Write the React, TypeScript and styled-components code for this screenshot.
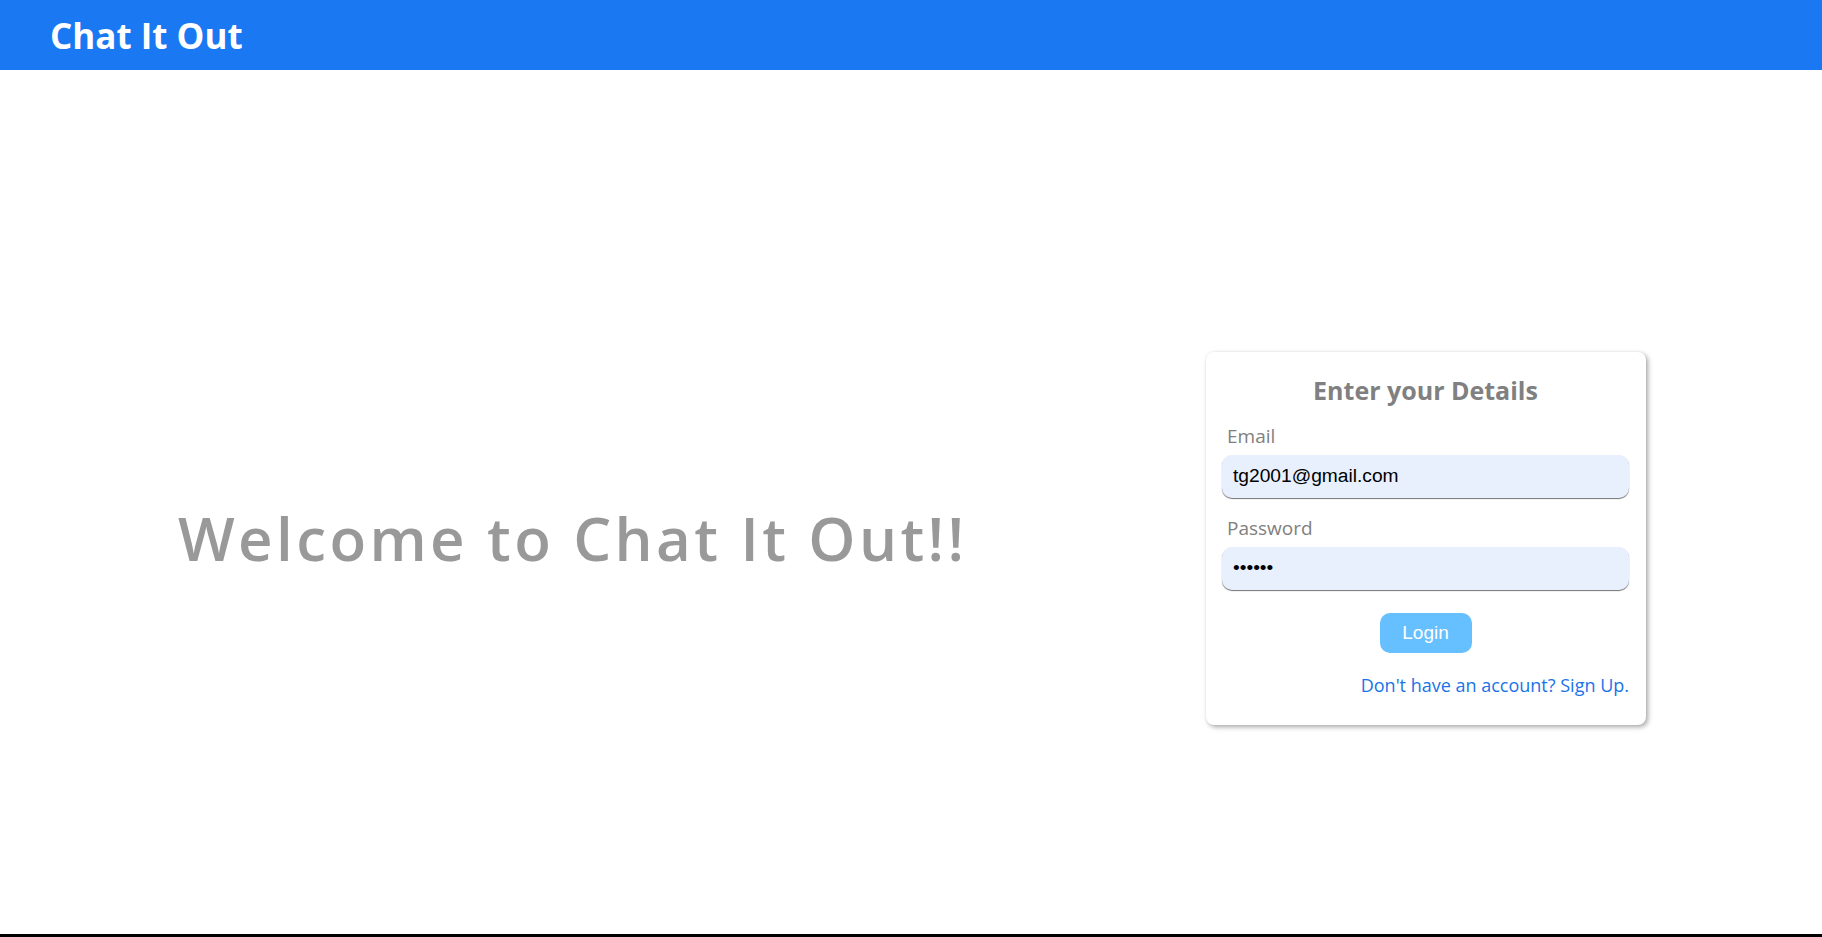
import React from "react";
import styled, { createGlobalStyle } from "styled-components";

const GlobalStyle = createGlobalStyle`
  html, body {
    margin: 0;
    padding: 0;
    background: #ffffff;
  }
  body {
    font-family: "Open Sans", "Noto Sans", sans-serif;
  }
  * { box-sizing: border-box; }
`;

const Page = styled.div`
  display: flex;
  flex-direction: column;
  height: 937px;
`;

const Header = styled.header`
  height: 70px;
  flex: 0 0 70px;
  background: #1a78f2;
  display: flex;
  align-items: center;
  padding-left: 50px;
`;

const Brand = styled.h1`
  margin: 0;
  font-family: "Open Sans", sans-serif;
  font-weight: 700;
  font-size: 35px;
  line-height: normal;
  color: #ffffff;
`;

const Main = styled.main`
  flex: 1;
  display: flex;
  align-items: center;
  justify-content: space-between;
  padding: 72px 176px 0 178px;
  border-bottom: 3px solid #000000;
`;

const Welcome = styled.h2`
  margin: 0;
  font-family: "Open Sans", sans-serif;
  font-weight: 650;
  font-size: 60px;
  font-stretch: 96%;
  letter-spacing: 3.4px;
  line-height: 76px;
  color: #999999;
`;

const Card = styled.form`
  width: 440px;
  padding: 21px 17px 28px 16px;
  background: #ffffff;
  border-radius: 8px;
  box-shadow: 2px 2px 5px rgba(0, 0, 0, 0.35), 0 0 2px rgba(0, 0, 0, 0.06);
  display: flex;
  flex-direction: column;
`;

const Title = styled.h3`
  margin: 0 0 16px;
  text-align: center;
  font-family: "Open Sans", sans-serif;
  font-weight: 700;
  font-size: 25px;
  line-height: normal;
  color: #808080;
`;

const Label = styled.label<{ $gap: number }>`
  margin-top: ${(p) => p.$gap}px;
  padding-left: 5px;
  font-family: "Open Sans", sans-serif;
  font-size: 19px;
  line-height: normal;
  color: #808080;
`;

const Input = styled.input`
  margin-top: 6px;
  width: 100%;
  height: 43px;
  border: none;
  outline: none;
  border-radius: 10px;
  background: #e8f0fe;
  box-shadow: 0 1px 1px rgba(0, 0, 0, 0.55);
  padding: 0 11px;
  font-family: "Liberation Sans", Arial, sans-serif;
  font-size: 19.2px;
  color: #000000;
`;

const Button = styled.button`
  align-self: center;
  margin-top: 23px;
  width: 92px;
  height: 40px;
  border: none;
  border-radius: 10px;
  background: #66bfff;
  color: #ffffff;
  font-family: "Liberation Sans", Arial, sans-serif;
  font-size: 19px;
  cursor: pointer;
`;

const SignUp = styled.a`
  align-self: flex-end;
  margin-top: 20px;
  font-family: "Open Sans", sans-serif;
  font-size: 18px;
  line-height: normal;
  color: #1a73e8;
  text-decoration: none;
`;

export default function App() {
  return (
    <>
      <GlobalStyle />
      <Page>
        <Header>
          <Brand>Chat It Out</Brand>
        </Header>
        <Main>
          <Welcome>Welcome to Chat It Out!!</Welcome>
          <Card onSubmit={(e) => e.preventDefault()}>
            <Title>Enter your Details</Title>
            <Label $gap={0} htmlFor="email">Email</Label>
            <Input id="email" type="email" defaultValue="tg2001@gmail.com" />
            <Label $gap={17} htmlFor="password">Password</Label>
            <Input id="password" type="password" defaultValue="tg2001" />
            <Button type="submit">Login</Button>
            <SignUp href="#">Don't have an account? Sign Up.</SignUp>
          </Card>
        </Main>
      </Page>
    </>
  );
}
